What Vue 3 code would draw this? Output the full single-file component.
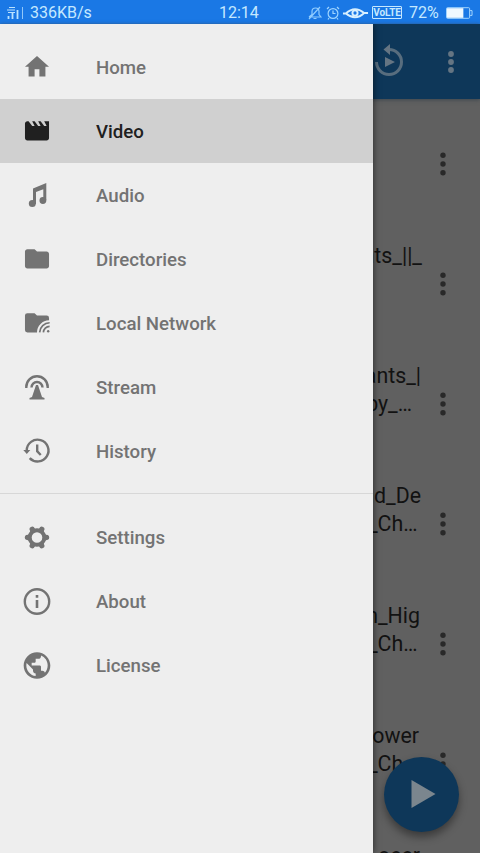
<script setup>
const sections = [
  [
    { label: 'Home', icon: 'home' },
    { label: 'Video', icon: 'video', active: true },
    { label: 'Audio', icon: 'audio' },
    { label: 'Directories', icon: 'folder' },
    { label: 'Local Network', icon: 'network' },
    { label: 'Stream', icon: 'stream' },
    { label: 'History', icon: 'history' },
  ],
  [
    { label: 'Settings', icon: 'settings' },
    { label: 'About', icon: 'about' },
    { label: 'License', icon: 'license' },
  ],
]

const paths = {
  home: 'M10 20v-6h4v6h5v-8h3L12 3 2 12h3v8z',
  video: 'M18 4l2 4h-2l-3-4h-2l2 4h-2l-3-4H8l2 4H8L5 4H4c-1.1 0-1.99.9-1.99 2L2 18c0 1.1.9 2 2 2h16c1.1 0 2-.9 2-2V4h-4z',
  folder: 'M10 4H4c-1.100 0-2 .9-2 2v12c0 1.100.9 2 2 2h16c1.100 0 2-.9 2-2V8c0-1.100-.9-2-2-2h-8z',
  license: 'M12 2C6.480 2 2 6.480 2 12s4.480 10 10 10 10-4.480 10-10S17.520 2 12 2zm-1 17.930c-3.950-.49-7-3.850-7-7.930 0-.62.080-1.210.21-1.790L9 15v1c0 1.100.9 2 2 2v1.930zm6.900-2.540c-.26-.81-1-1.390-1.900-1.390h-1v-3c0-.55-.45-1-1-1H8v-2h2c.55 0 1-.45 1-1V7h2c1.100 0 2-.9 2-2v-.41c2.930 1.190 5 4.060 5 7.410 0 2.080-.8 3.970-2.100 5.390z',
}

const boxes = {
  home: '-1.300 -1.100 26.600 26.600',
  video: '-1.300 -1.100 26.600 26.600',
  folder: '-1.300 -1.100 26.600 26.600',
  network: '-1.300 -1.100 26.600 26.600',
  license: '0 .4 24 24',
}

const videos = [
  { lines: [] },
  { lines: [{ text: 'Giants_||_', inset: 58 }] },
  { lines: [{ text: 'Giants_|', inset: 59 }, { text: 'by_…', inset: 68 }] },
  { lines: [{ text: 'nd_De', inset: 59 }, { text: '_Ch…', inset: 62.5 }] },
  { lines: [{ text: 'in_Hig', inset: 60 }, { text: '_Ch…', inset: 62.5 }] },
  { lines: [{ text: 'Power', inset: 61 }, { text: '_Ch…', inset: 62.5 }] },
  { lines: [{ text: 'oeer', inset: 60 }] },
]
</script>

<template>
  <div class="screen">
    <header class="status">
      <svg class="signal" viewBox="0 0 20 16" fill="none" stroke="#b9e2ff">
        <path d="M1 5h8M3 2.500h6M2 7.500h7" stroke-width="1.200" />
        <path d="M2.500 11v3M6.500 8v6M11.500 5v9" stroke-width="1.800" />
        <path d="M16.500 2v12" stroke-width="1" opacity=".75" />
      </svg>
      <span class="speed">336KB/s</span>
      <span class="clock">12:14</span>
      <div class="indicators">
        <svg class="bell" viewBox="0 0 14 14" fill="none" stroke="#8fccff" stroke-width="1.200">
          <path d="M1 11h12l-2-2.500V5.500C11 3 9.500 2 7.500 2S4 3 4 5.500v3L1 11M5.500 12.500h3M1 13 12 1" />
        </svg>
        <svg class="alarm" viewBox="0 0 14 14" fill="none" stroke="#9fd5ff" stroke-width="1.200">
          <circle cx="7" cy="7.500" r="4.900" /><path d="M7 4.500v3h2.500M1 3l2-2M13 3l-2-2M3 12l-1 1.500M11 12l1 1.500" />
        </svg>
        <svg class="eye" viewBox="0 0 28 14" fill="none" stroke="#d8f0ff">
          <path d="M1 7.500h3Q13-1 23 7h4M4 7.500q10 8 19-.5" stroke-width="2" />
          <circle cx="13.500" cy="7" r="2.700" stroke-width="2" />
        </svg>
        <span class="volte">VoLTE</span>
        <span class="percent">72%</span>
        <svg class="battery" viewBox="0 0 28 12">
          <rect x=".5" y=".5" width="24" height="11" rx="1" fill="none" stroke="#a8d9ff" />
          <path d="M1 1h17v10H1z" fill="#eef8ff" /><path d="M25 3.500h2v5h-2" fill="none" stroke="#a8d9ff" />
        </svg>
      </div>
    </header>

    <main class="page">
      <div class="toolbar">
        <svg class="replay" viewBox="0 0 32 34" fill="none">
          <path d="M3.500 19a12.500 12.500 0 1 0 12.500-12.500" stroke="#586d7e" stroke-width="3" />
          <path d="M17 1v11L10.500 6.500zM12 14l10 5-10 5z" fill="#657583" />
        </svg>
        <svg class="dots" viewBox="0 0 8 24" fill="#657583"><circle cx="4" cy="4" r="2.900" /><circle cx="4" cy="12" r="2.900" /><circle cx="4" cy="20" r="2.900" /></svg>
      </div>
      <div class="list">
        <article v-for="(video, i) in videos" :key="i" class="row">
          <div class="title">
            <span v-for="(line, n) in video.lines" :key="n" :style="{ paddingRight: line.inset + 'px' }">{{ line.text }}</span>
          </div>
          <svg class="more" viewBox="0 0 8 24" fill="#292929"><circle cx="4" cy="3.300" r="2.700" /><circle cx="4" cy="12" r="2.700" /><circle cx="4" cy="20.700" r="2.700" /></svg>
        </article>
      </div>
    </main>

    <button class="play" aria-label="Play"><svg viewBox="0 0 24 28"><path d="M0 0v28l24-14z" fill="#7b868e" /></svg></button>

    <nav class="drawer">
      <div v-for="(section, s) in sections" :key="s" class="section">
        <div v-for="item in section" :key="item.label" class="item" :class="{ active: item.active }">
          <svg class="icon" :viewBox="boxes[item.icon] || '0 0 32 32'" fill="currentColor">
            <path v-if="paths[item.icon]" :d="paths[item.icon]" />
            <template v-else-if="item.icon === 'network'">
              <path d="M10 4H4a2 2 0 0 0-2 2v12a2 2 0 0 0 2 2h8a10 10 0 0 1 10-10V8a2 2 0 0 0-2-2h-8z" />
              <path d="M14.200 20a8.300 8.300 0 0 1 8.300-8M17.300 20a5.200 5.200 0 0 1 5.200-5" fill="none" stroke="currentColor" stroke-width="1.400" />
              <circle cx="21.300" cy="19" r="1" />
            </template>
            <template v-else-if="item.icon === 'audio'">
              <path d="M12 9.500 25.300 4v17h-3V10.300L15 13v12h-3z" />
              <circle cx="11.300" cy="24.400" r="3.500" /><circle cx="21.900" cy="21.500" r="3.400" />
            </template>
            <template v-else-if="item.icon === 'stream'">
              <path d="M5.300 17V16a10.700 10.700 0 0 1 21.400 0v1M10.500 16.500a5.500 5.500 0 0 1 11 0" fill="none" stroke="currentColor" stroke-width="2.400" />
              <path d="M15 14h2l4 12 2.500 1v1.500h-15V27l2.500-1z" />
            </template>
            <template v-else-if="item.icon === 'history'">
              <path d="M5.700 15.500A10.900 10.900 0 1 1 8.700 23.100" fill="none" stroke="currentColor" stroke-width="2.400" />
              <path d="M2.300 15h7L5.800 19zM15 9.500h2.400v6.300l3.200 3.400-1.700 1.500-3.900-3.900z" />
            </template>
            <template v-else-if="item.icon === 'settings'">
              <circle cx="16" cy="15.500" r="7.300" fill="none" stroke="currentColor" stroke-width="4" />
              <path v-for="a in 6" :key="a" :transform="`rotate(${a * 60} 16 15.500)`" d="M22 9.500l2.600 3.300q2.700-.1 3.300 1.100q.7 1.600 0 3.200q-.6 1.200-3.300 1.100L22 21.500z" />
            </template>
            <template v-else>
              <circle cx="16" cy="15.500" r="12.200" fill="none" stroke="currentColor" stroke-width="2.400" />
              <path d="M14.700 9.100h2.600v2.600h-2.600zM14.700 14.100h2.600v8h-2.600z" />
            </template>
          </svg>
          <span>{{ item.label }}</span>
        </div>
      </div>
    </nav>
  </div>
</template>

<style>
body { margin: 0; }
</style>

<style scoped>
.screen { position: relative; width: 480px; height: 853px; overflow: hidden; background: #606060; font-family: Roboto, sans-serif; }
.status { height: 24px; background: #1a78e5; color: #c5e8ff; display: grid; grid-template-columns: 20px 189px 90px 1fr; align-items: center; padding-left: 6px; box-sizing: border-box; font-size: 16px; line-height: 24px; }
.signal { width: 20px; height: 16px; }
.speed { padding: 1px 0 0 4px; }
.clock { padding: 1px 0 0 4px; }
.indicators { display: flex; align-items: center; padding-left: 3px; }
.bell { width: 14px; height: 14px; }
.alarm { width: 14px; height: 14px; margin-left: 4px; }
.eye { width: 27px; height: 14px; margin-left: 2px; }
.volte { box-sizing: border-box; width: 30px; height: 13px; margin-left: 3px; border: 1px solid #c5e8ff; border-radius: 1px; font-size: 10px; font-weight: 700; line-height: 11.500px; text-align: center; letter-spacing: -.1px; }
.percent { width: 30px; margin: 1px 0 0 7px; font-size: 16px; }
.battery { width: 27px; height: 12px; margin-left: 7px; }
.toolbar { box-sizing: border-box; height: 75px; padding: 0 25.500px 0 373px; background: #0e3759; display: flex; align-items: center; justify-content: space-between; box-shadow: 0 1px 4px #3c464e; }
.replay { width: 32px; height: 34px; margin-top: -3px; }
.dots { width: 8px; height: 24px; }
.list { padding-top: 5px; }
.row { height: 120px; display: grid; grid-template-columns: 1fr; }
.title { grid-area: 1 / 1; padding-top: 18px; color: #121212; font-size: 21.330px; line-height: 28px; text-align: right; }
.title span { display: block; white-space: nowrap; }
.more { grid-area: 1 / 1; justify-self: end; width: 8px; height: 24px; margin: 48px 33px 0 0; }
.play { position: absolute; right: 21px; bottom: 21px; width: 75px; height: 75px; padding: 0 0 1px 4px; border: 0; border-radius: 50%; background: #0e3759; display: grid; place-items: center; box-shadow: 0 5px 8px #0006; }
.play svg { width: 25px; height: 28px; }
.drawer { position: absolute; top: 24px; left: 0; width: 373px; bottom: 0; padding-top: 11px; box-sizing: border-box; background: #eee; box-shadow: 0 0 7px #0009; clip-path: inset(0 -12px 0 0); }
.section + .section { margin-top: 10px; border-top: 1px solid #d7d7d7; padding-top: 12px; }
.item { height: 64px; display: flex; align-items: center; gap: 43px; padding-left: 21px; color: #737373; font-size: 18.670px; font-weight: 500; line-height: 24px; }
.item span { padding-top: 2px; }
.section + .section .item span { padding-top: 0; }
.active { background: #d0d0d0; color: #202020; }
.icon { width: 32px; height: 32px; flex: none; }
</style>
